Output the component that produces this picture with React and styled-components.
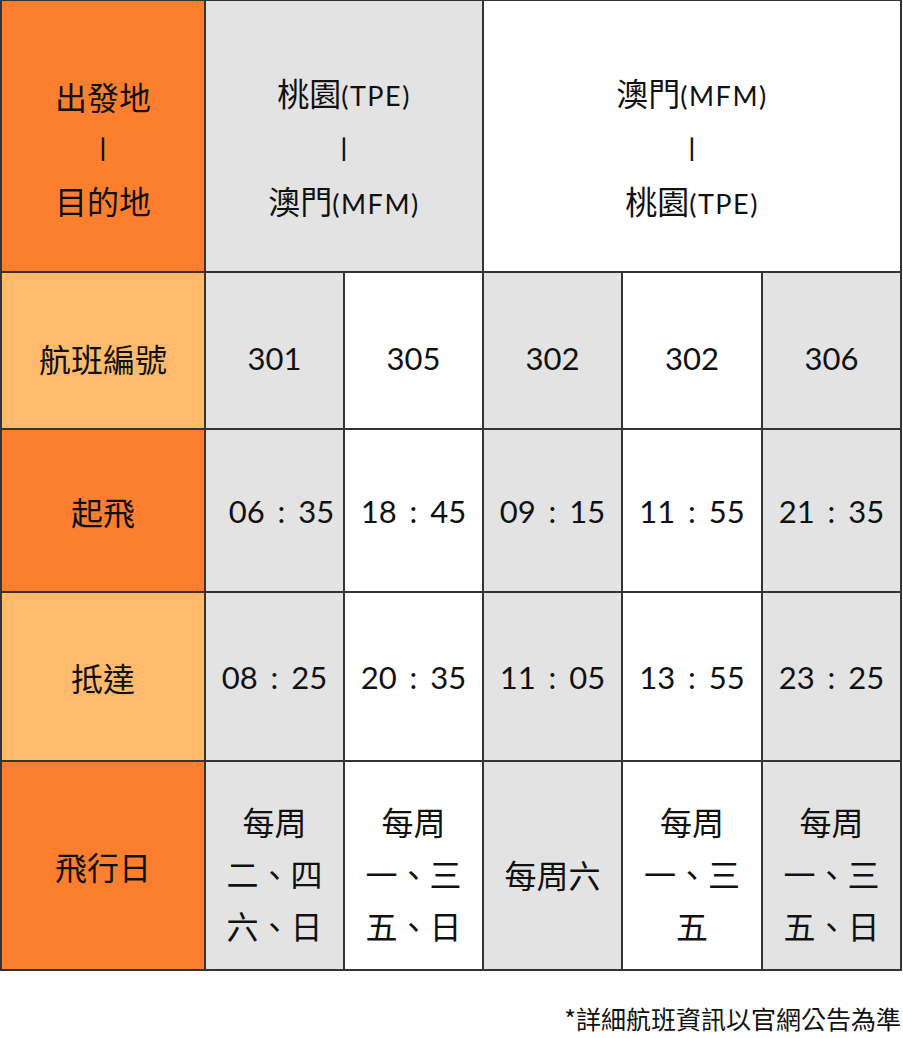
import React from 'react';
import styled, { createGlobalStyle } from 'styled-components';

const GlobalStyle = createGlobalStyle`
  html, body {
    margin: 0;
    padding: 0;
    background: #ffffff;
  }
  body {
    font-family: "Lato", "Noto Sans CJK TC", sans-serif;
    color: #111;
  }
`;

const colors = {
  dark: '#fc7f2f',
  light: '#ffbb6b',
  gray: '#e3e3e3',
  white: '#ffffff',
};

const Page = styled.div`
  width: 903px;
  height: 1038px;
  display: flex;
  flex-direction: column;
  overflow: hidden;
`;

const Table = styled.div`
  display: grid;
  grid-template-columns: 202px 137px 137px 137px 138px 137px;
  grid-template-rows: 270px 155px 161px 167px 207px;
  gap: 2px;
  padding: 1px 2px 2px 2px;
  width: 902px;
  box-sizing: border-box;
  background: #343434;
`;

const Cell = styled.div`
  grid-column: span ${(p) => p.$span || 1};
  background: ${(p) => colors[p.$bg] || colors.white};
  display: flex;
  flex-direction: column;
  align-items: center;
  justify-content: center;
  text-align: center;
  padding-top: ${(p) => (p.$shift || 0) * 2}px;
  padding-left: ${(p) => p.$nudge || 0}px;
  box-sizing: border-box;
  font-size: 32px;
  line-height: 52px;
  white-space: nowrap;
`;

const Label = styled.span`
  font-family: "Noto Sans CJK TC", sans-serif;
  font-weight: 400;
  font-size: 32px;
`;

const Code = styled.span`
  font-family: "Lato", sans-serif;
  font-weight: 400;
  font-size: 27px;
  letter-spacing: 1.5px;
`;

const Bar = styled.span`
  font-family: "Lato", sans-serif;
  font-size: 24px;
  font-weight: 700;
`;

const Num = styled.span`
  font-family: "Lato", sans-serif;
  font-weight: 400;
  font-size: 31px;
  word-spacing: 5px;
`;

const Note = styled.div`
  margin-top: 32px;
  align-self: flex-end;
  padding-right: 2px;
  font-family: "Noto Sans CJK TC", sans-serif;
  font-size: 25px;
  line-height: 30px;
  font-weight: 400;
`;

const Route = ({ from, fromCode, to, toCode }) => (
  <>
    <div>
      <Label>{from}</Label>
      <Code>({fromCode})</Code>
    </div>
    <Bar>|</Bar>
    <div>
      <Label>{to}</Label>
      <Code>({toCode})</Code>
    </div>
  </>
);

const flights = [
  { no: '301', dep: '06 : 35', arr: '08 : 25', days: ['每周', '二、四', '六、日'], depNudge: 14 },
  { no: '305', dep: '18 : 45', arr: '20 : 35', days: ['每周', '一、三', '五、日'] },
  { no: '302', dep: '09 : 15', arr: '11 : 05', days: ['每周六'], dayShift: 8 },
  { no: '302', dep: '11 : 55', arr: '13 : 55', days: ['每周', '一、三', '五'] },
  { no: '306', dep: '21 : 35', arr: '23 : 25', days: ['每周', '一、三', '五、日'] },
];

const shade = (i) => (i % 2 === 0 ? 'gray' : 'white');

const App = () => (
  <Page>
    <GlobalStyle />
    <Table>
      <Cell $bg="dark" $shift={12}>
        <Label>出發地</Label>
        <Bar>|</Bar>
        <Label>目的地</Label>
      </Cell>
      <Cell $bg="gray" $span={2} $shift={12}>
        <Route from="桃園" fromCode="TPE" to="澳門" toCode="MFM" />
      </Cell>
      <Cell $bg="white" $span={3} $shift={12}>
        <Route from="澳門" fromCode="MFM" to="桃園" toCode="TPE" />
      </Cell>

      <Cell $bg="light" $shift={7}>
        <Label>航班編號</Label>
      </Cell>
      {flights.map((f, i) => (
        <Cell key={`no-${i}`} $bg={shade(i)} $shift={7}>
          <Num>{f.no}</Num>
        </Cell>
      ))}

      <Cell $bg="dark">
        <Label>起飛</Label>
      </Cell>
      {flights.map((f, i) => (
        <Cell key={`dep-${i}`} $bg={shade(i)} $nudge={f.depNudge}>
          <Num>{f.dep}</Num>
        </Cell>
      ))}

      <Cell $bg="light">
        <Label>抵達</Label>
      </Cell>
      {flights.map((f, i) => (
        <Cell key={`arr-${i}`} $bg={shade(i)}>
          <Num>{f.arr}</Num>
        </Cell>
      ))}

      <Cell $bg="dark">
        <Label>飛行日</Label>
      </Cell>
      {flights.map((f, i) => (
        <Cell key={`day-${i}`} $bg={shade(i)} $shift={f.dayShift ?? 7}>
          {f.days.map((d) => (
            <Label key={d}>{d}</Label>
          ))}
        </Cell>
      ))}
    </Table>
    <Note>*詳細航班資訊以官網公告為準</Note>
  </Page>
);

export default App;
